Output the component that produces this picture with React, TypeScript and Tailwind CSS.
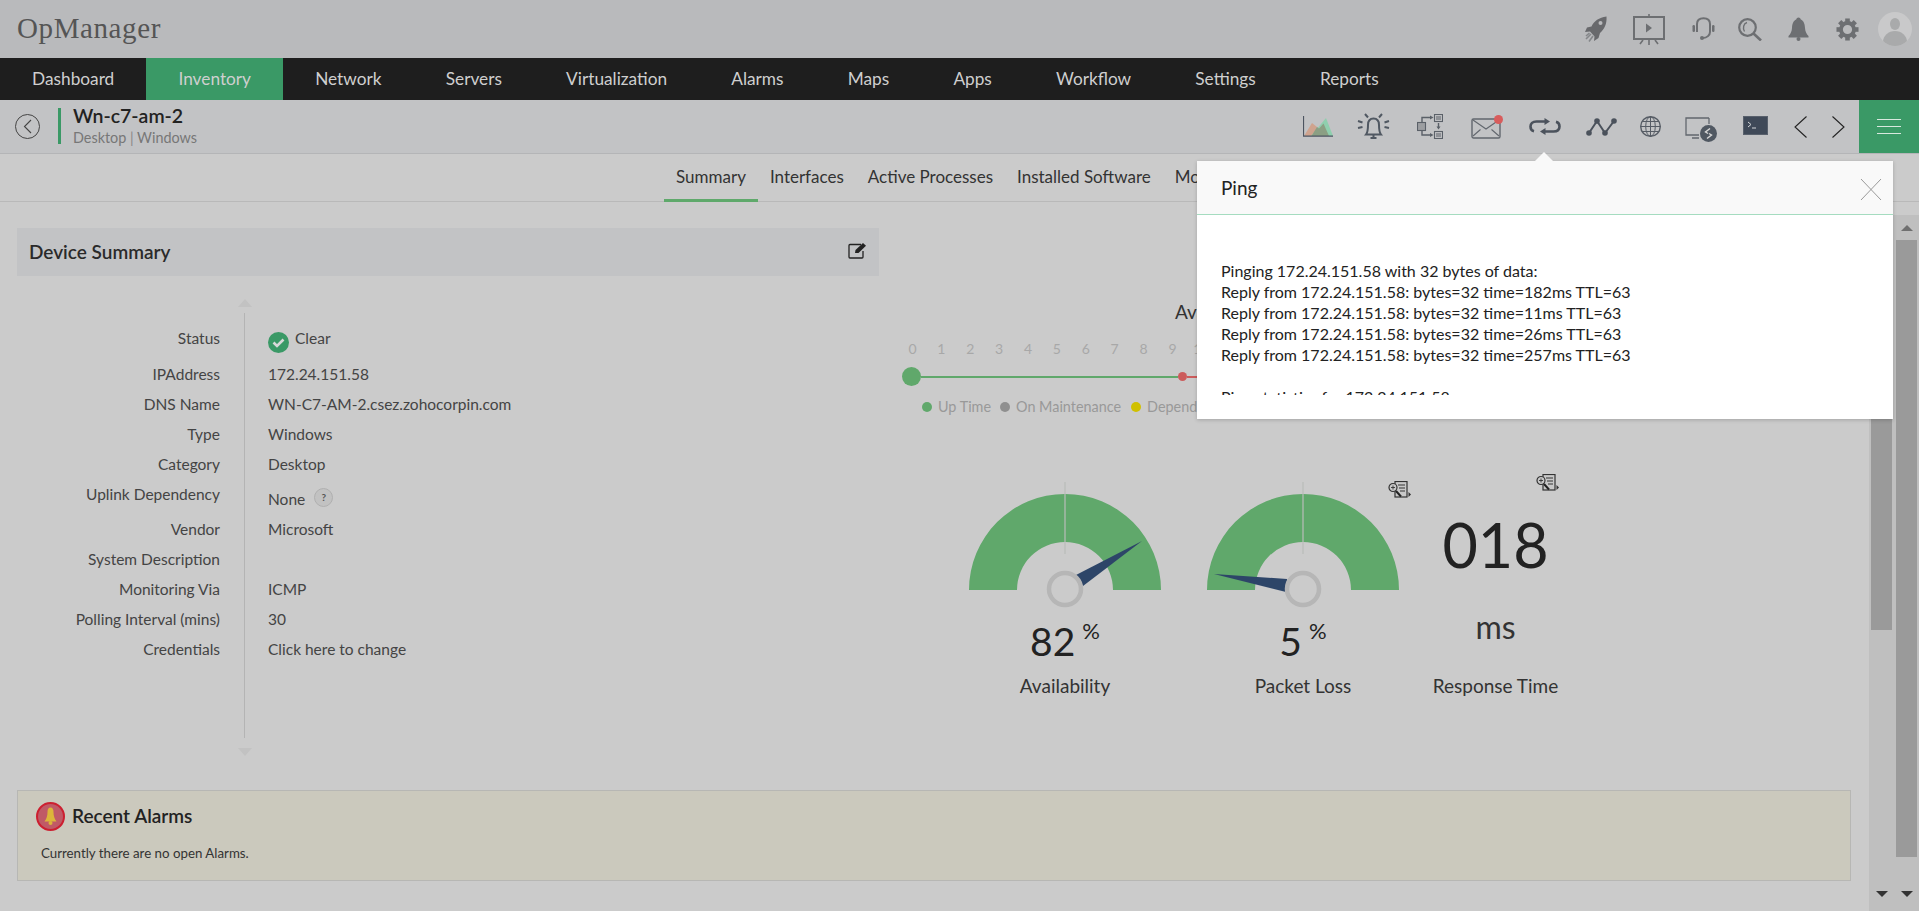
import React from 'react';

const navItems = ['Dashboard', 'Inventory', 'Network', 'Servers', 'Virtualization', 'Alarms', 'Maps', 'Apps', 'Workflow', 'Settings', 'Reports'];
const tabs = ['Summary', 'Interfaces', 'Active Processes', 'Installed Software', 'Monitors'];
const hours = Array.from({ length: 11 }, (_, i) => i);

const details = [
  { label: 'IPAddress', value: '172.24.151.58' },
  { label: 'DNS Name', value: 'WN-C7-AM-2.csez.zohocorpin.com' },
  { label: 'Type', value: 'Windows' },
  { label: 'Category', value: 'Desktop' },
];
const moreDetails = [
  { label: 'Vendor', value: 'Microsoft' },
  { label: 'System Description', value: '' },
  { label: 'Monitoring Via', value: 'ICMP' },
  { label: 'Polling Interval (mins)', value: '30' },
  { label: 'Credentials', value: 'Click here to change' },
];

const pingLines = [
  'Pinging 172.24.151.58 with 32 bytes of data:',
  'Reply from 172.24.151.58: bytes=32 time=182ms TTL=63',
  'Reply from 172.24.151.58: bytes=32 time=11ms TTL=63',
  'Reply from 172.24.151.58: bytes=32 time=26ms TTL=63',
  'Reply from 172.24.151.58: bytes=32 time=257ms TTL=63',
  '\u00a0',
  'Ping statistics for 172.24.151.58:',
];

const Rocket = () => (
  <svg width="22" height="26" viewBox="0 0 22 26" className="shrink-0">
    <path d="M21.5 0.5 C14 1.5 9 5 6.5 10.5 L2 11.5 L0 16 L5 15.5 L9.5 20.5 L9 25 L13.5 22 L15 17 C19.5 13 22 8 21.5 0.5 Z" fill="#68696c" />
    <circle cx="15.5" cy="7" r="2" fill="#b9babc" />
    <path d="M6 18 L1 23 M8 20 L4 25.5 M4.5 17 L1 20" stroke="#85878a" strokeWidth="1.6" />
  </svg>
);

const Presentation = () => (
  <svg width="32" height="31" viewBox="0 0 32 31" className="shrink-0">
    <path d="M16 0 V3 M16 25 V31 M10 26 L7 30 M22 26 L25 30" stroke="#6d6f72" strokeWidth="1.6" />
    <rect x="1" y="3" width="30" height="22" fill="none" stroke="#6d6f72" strokeWidth="2" />
    <path d="M13 9.5 L19 14 L13 18.5 Z" fill="#6d6f72" />
  </svg>
);

const Headset = () => (
  <svg width="23" height="24" viewBox="0 0 23 24" className="shrink-0">
    <path d="M5 15 V7 C5 3 8 1.2 11.5 1.2 C15 1.2 18 3 18 7 V15 C18 18 15 21 11 21" fill="none" stroke="#6d6f72" strokeWidth="2" />
    <rect x="0.5" y="8" width="2.5" height="7" rx="1.2" fill="#6d6f72" />
    <rect x="20" y="8" width="2.5" height="7" rx="1.2" fill="#6d6f72" />
    <circle cx="10" cy="21" r="2" fill="#6d6f72" />
  </svg>
);

const Search = () => (
  <svg width="24" height="23" viewBox="0 0 24 23" className="shrink-0">
    <circle cx="9.5" cy="9.5" r="8.3" fill="none" stroke="#6d6f72" strokeWidth="2.2" />
    <path d="M9 4.5 C5.5 5.5 4.5 10 6.5 13.5" fill="none" stroke="#6d6f72" strokeWidth="1.4" />
    <path d="M15.5 15.5 L23 22.5" stroke="#6d6f72" strokeWidth="2.6" />
  </svg>
);

const Bell = () => (
  <svg width="21" height="24" viewBox="0 0 21 24" className="shrink-0">
    <path d="M10.5 0.5 C12 0.5 12.5 1.5 12.8 2.6 C16 4 16.8 7.5 17 11 C17.2 14.5 18.5 17 20.5 19 V20.5 H0.5 V19 C2.5 17 3.8 14.5 4 11 C4.2 7.5 5 4 8.2 2.6 C8.5 1.5 9 0.5 10.5 0.5 Z" fill="#6d6f72" />
    <circle cx="10.5" cy="22" r="2" fill="#6d6f72" />
  </svg>
);

const Gear = () => (
  <svg width="25" height="23" viewBox="0 0 24 24" className="shrink-0">
    <circle cx="12" cy="12" r="6.8" fill="none" stroke="#6d6f72" strokeWidth="4" />
    {[0, 45, 90, 135, 180, 225, 270, 315].map((a) => (
      <rect key={a} x="9.6" y="0.5" width="4.8" height="5" fill="#6d6f72" transform={`rotate(${a} 12 12)`} />
    ))}
  </svg>
);

const Avatar = () => (
  <svg width="34" height="34" viewBox="0 0 34 34" className="shrink-0">
    <circle cx="17" cy="17" r="17" fill="#c9c9ca" />
    <clipPath id="avatar-clip"><circle cx="17" cy="17" r="17" /></clipPath>
    <g clipPath="url(#avatar-clip)" fill="#a9aaab">
      <ellipse cx="17" cy="12" rx="5" ry="6" />
      <ellipse cx="17" cy="30" rx="12" ry="11" />
    </g>
  </svg>
);

const ChartIcon = () => (
  <svg width="30" height="21" viewBox="0 0 30 21" className="shrink-0">
    <path d="M1 20 L9 7 L14 11 L20 20 Z" fill="#cfa38e" />
    <path d="M8 20 L23 2 L30 20 Z" fill="#8fcfae" />
    <path d="M8.5 20 L14 11 L16 12.5 L20.5 7.5 L26 20 Z" fill="#8b9f84" />
    <path d="M0.5 0 V20.2 H30" fill="none" stroke="#4c5460" strokeWidth="1.2" />
  </svg>
);

const AlarmIcon = () => (
  <svg width="33" height="27" viewBox="0 0 33 27" className="shrink-0">
    <g fill="none" stroke="#505862" strokeWidth="2">
      <path d="M9 21.5 C11 19 11 15 11 12 C11 8 13 5.5 16.5 5.5 C20 5.5 22 8 22 12 C22 15 22 19 24 21.5 Z" />
      <path d="M16.5 22 V25 M13.5 25 H19.5" />
      <path d="M8 1 L11 4.5 M25 1 L22 4.5 M1 8 L5.5 9.5 M32 8 L27.5 9.5 M1 15 L5.5 14 M32 15 L27.5 14" />
    </g>
  </svg>
);

const WorkflowIcon = () => (
  <svg width="26" height="25" viewBox="0 0 26 25" className="shrink-0">
    <g fill="none" stroke="#5a6068" strokeWidth="1.1">
      <rect x="17.5" y="0.5" width="8" height="7" />
      <rect x="17.5" y="17.5" width="8" height="7" />
      <rect x="0.5" y="8.5" width="8" height="8" fill="#9c9ea1" />
      <path d="M19 3 H24 M19 5 H24 M19 20 H24 M19 22 H24" />
      <path d="M5 8 V3.5 H13" strokeWidth="1.4" />
      <path d="M5 17 V21 H13" strokeWidth="1.4" />
      <path d="M21.5 9 V13" strokeWidth="1.4" />
    </g>
    <path d="M13 1.5 L16.5 3.5 L13 5.5 Z M13 19 L16.5 21 L13 23 Z M19.5 12.5 H23.5 L21.5 15.5 Z" fill="#5a6068" />
  </svg>
);

const MailIcon = () => (
  <svg width="32" height="24" viewBox="0 0 32 24" className="shrink-0">
    <rect x="1" y="4" width="28" height="19" rx="1.5" fill="none" stroke="#62676e" strokeWidth="1.4" />
    <path d="M2 5 L15 14 L28 5 M2 21 L9.5 14.5 M28 21 L20.5 14.5" fill="none" stroke="#62676e" strokeWidth="1.1" />
    <circle cx="27.5" cy="4.5" r="4.5" fill="#d85c5c" />
  </svg>
);

const LoopIcon = () => (
  <svg width="32" height="17" viewBox="0 0 32 17" className="shrink-0">
    <path d="M16 3.5 H7.5 C3.5 3.5 1.5 5.5 1.5 8.5 C1.5 11 3 12.8 5 13.3 M16 13.5 H24.5 C28.5 13.5 30.5 11.5 30.5 8.5 C30.5 6 29 4.2 27 3.7" fill="none" stroke="#4b525c" strokeWidth="2.6" />
    <path d="M15.5 0 L21 3.5 L15.5 7 Z M16.5 10 L11 13.5 L16.5 17 Z" fill="#4b525c" />
  </svg>
);

const GraphIcon = () => (
  <svg width="31" height="18" viewBox="0 0 31 18" className="shrink-0">
    <path d="M3 15 L11 3 L19 15 L28 3" fill="none" stroke="#4b525c" strokeWidth="2" />
    <g fill="#4b525c">
      <circle cx="3" cy="15" r="2.8" />
      <circle cx="11" cy="3" r="2.8" />
      <circle cx="19" cy="15" r="2.8" />
      <circle cx="28" cy="3" r="2.8" />
    </g>
  </svg>
);

const GlobeIcon = () => (
  <svg width="21" height="21" viewBox="0 0 21 21" className="shrink-0">
    <g fill="none" stroke="#565c65" strokeWidth="1">
      <circle cx="10.5" cy="10.5" r="9.8" strokeWidth="1.4" />
      <ellipse cx="10.5" cy="10.5" rx="4.8" ry="9.8" />
      <path d="M10.5 0.7 V20.3 M0.7 10.5 H20.3 M2 5.5 H19 M2 15.5 H19" />
    </g>
  </svg>
);

const RdpIcon = () => (
  <svg width="32" height="25" viewBox="0 0 32 25" className="shrink-0">
    <path d="M24 1 H1 V18 H14 M7 21 H14" fill="none" stroke="#62676e" strokeWidth="1.3" />
    <path d="M24 1 V7" stroke="#62676e" strokeWidth="1.3" />
    <circle cx="23.5" cy="16.5" r="8.5" fill="#505862" />
    <path d="M25 11.5 L20.5 15 L23 16.5 M22 21.5 L26.5 18 L24 16.5" fill="none" stroke="#d8d8d8" strokeWidth="1.4" />
  </svg>
);

const TerminalIcon = () => (
  <svg width="25" height="19" viewBox="0 0 25 19" className="shrink-0">
    <rect x="0.5" y="0.5" width="24" height="18" fill="#3f4958" stroke="#58606c" />
    <path d="M5 6 L8 8.5 L5 11 M9 12 H13" fill="none" stroke="#d4d6d8" strokeWidth="1" />
  </svg>
);

const Chevron = ({ dir }: { dir: 'left' | 'right' }) => (
  <svg width="13" height="22" viewBox="0 0 13 22" className="shrink-0">
    <path d={dir === 'left' ? 'M12.5 0.5 L1 11 L12.5 21.5' : 'M0.5 0.5 L12 11 L0.5 21.5'} fill="none" stroke="#222" strokeWidth="1.1" />
  </svg>
);

const ReportIcon = () => (
  <svg width="23" height="17" viewBox="0 0 23 17" className="shrink-0">
    <rect x="7" y="0.5" width="12" height="15.5" fill="#c8c8c8" stroke="#333" strokeWidth="1.2" />
    <path d="M10 4 H17 M11 7 H17 M12 10 H17" stroke="#333" strokeWidth="1.1" />
    <circle cx="5" cy="6.5" r="4" fill="#c8c8c8" stroke="#333" strokeWidth="1.2" />
    <path d="M3 6.5 H7 M5 4.5 V8.5" stroke="#333" strokeWidth="0.9" />
    <path d="M8 10 L13 15.5" stroke="#222" strokeWidth="2" />
    <path d="M20.5 11 L23 13.5 L20.5 16 Z" fill="#333" />
  </svg>
);

const Gauge = ({ needle, value, label }: { needle: string; value: string; label: string }) => (
  <div className="flex flex-col items-center w-[192px]">
    <svg width="192" height="130" viewBox="0 0 192 130" className="shrink-0">
      <path d="M0 108 A96 96 0 0 1 192 108 H144 A48 48 0 0 0 48 108 Z" fill="#60a86b" />
      <path d="M96 0 V72" stroke="#b9bcb9" strokeWidth="1.2" />
      <polygon points={needle} fill="#2d4568" />
      <circle cx="96" cy="107" r="16" fill="none" stroke="#b6b6b6" strokeWidth="4.5" />
    </svg>
    <div className="flex items-start h-[56px] mt-[1px] text-[#222]">
      <span className="text-[39px] leading-[56px] font-normal">{value}</span>
      <span className="text-[22px] leading-[26px] ml-[7px] mt-[5px]">%</span>
    </div>
    <div className="text-[19px] leading-6 text-[#333] mt-[5px] whitespace-nowrap">{label}</div>
  </div>
);

const Scrollbar = ({ thumbHeight }: { thumbHeight: string }) => (
  <div className="w-[25px] flex flex-col items-center h-full">
    <div className="h-[25px] flex items-center justify-center shrink-0">
      <div className="w-0 h-0 border-l-[6px] border-r-[6px] border-b-[6px] border-l-transparent border-r-transparent border-b-[#707070]" />
    </div>
    <div className={`w-[21px] bg-[#9a9a9a] shrink-0 ${thumbHeight}`} />
    <div className="flex-1" />
    <div className="h-[22px] flex items-start pt-[2px] justify-center shrink-0">
      <div className="w-0 h-0 border-l-[6px] border-r-[6px] border-t-[6px] border-l-transparent border-r-transparent border-t-[#333]" />
    </div>
  </div>
);

export default function App() {
  return (
    <div className="relative w-full h-screen overflow-hidden bg-[#cbcbcb] flex flex-col font-['Lato','Open_Sans',sans-serif]">
      {/* Top bar */}
      <div className="h-[58px] shrink-0 bg-[#b9babc] flex items-center pl-[17px] pr-[7px]">
        <span className="font-['Liberation_Serif',serif] text-[29px] text-[#555] tracking-[0.6px]">OpManager</span>
        <div className="ml-auto flex items-center">
          <Rocket />
          <div className="ml-[26px]"><Presentation /></div>
          <div className="ml-[27px]"><Headset /></div>
          <div className="ml-[23px]"><Search /></div>
          <div className="ml-[26px]"><Bell /></div>
          <div className="ml-[26px]"><Gear /></div>
          <div className="ml-[18px]"><Avatar /></div>
        </div>
      </div>

      {/* Main nav */}
      <div className="h-[42px] shrink-0 bg-[#1e1e1e] flex text-[17.25px] text-[#cfcfcf]">
        {navItems.map((item) => (
          <div key={item} className={`px-[32.1px] flex items-center ${item === 'Inventory' ? 'bg-[#3a9966]' : ''}`}>
            {item}
          </div>
        ))}
      </div>

      {/* Device header */}
      <div className="h-[54px] shrink-0 bg-[#c2c3c5] border-b border-[#b4b5b7] flex items-start">
        <div className="ml-[15px] mt-[14px] w-[25px] h-[25px] rounded-full border border-[#444] flex items-center justify-center">
          <svg width="9" height="15" viewBox="0 0 9 15"><path d="M8 1 L1.5 7.5 L8 14" fill="none" stroke="#444" strokeWidth="1.1" /></svg>
        </div>
        <div className="ml-[18px] mt-[8px] h-[36px] border-l-[3px] border-[#3a9966] pl-[12px]">
          <div className="text-[19.5px] leading-[18px] mt-[-1px] font-semibold text-[#222]">Wn-c7-am-2</div>
          <div className="text-[14.4px] leading-[18px] mt-[4px] text-[#777]">Desktop <span className="text-[#888]">|</span> Windows</div>
        </div>
        <div className="ml-auto flex items-center h-full">
          <ChartIcon />
          <div className="ml-[24px]"><AlarmIcon /></div>
          <div className="ml-[27px]"><WorkflowIcon /></div>
          <div className="ml-[28px]"><MailIcon /></div>
          <div className="ml-[26px]"><LoopIcon /></div>
          <div className="ml-[25px]"><GraphIcon /></div>
          <div className="ml-[23px]"><GlobeIcon /></div>
          <div className="ml-[24px] mt-[5px]"><RdpIcon /></div>
          <div className="ml-[26px] mt-[-2px]"><TerminalIcon /></div>
          <div className="ml-[26px]"><Chevron dir="left" /></div>
          <div className="ml-[25px]"><Chevron dir="right" /></div>
          <div className="ml-[14px] w-[60px] h-full bg-[#3a9966] flex flex-col items-center justify-center gap-[6px]">
            <div className="w-[24px] h-[1px] bg-[#d8e8de]" />
            <div className="w-[24px] h-[1px] bg-[#d8e8de]" />
            <div className="w-[24px] h-[1px] bg-[#d8e8de]" />
          </div>
        </div>
      </div>

      {/* Tabs */}
      <div className="h-[48px] shrink-0 border-b border-[#b9b9b9] flex pl-[664px] text-[17px] text-[#333]">
        {tabs.map((tab) => (
          <div key={tab} className={`h-[48px] flex items-center whitespace-nowrap ${tab === 'Summary' ? 'px-3 border-b-[3px] border-[#5fa96b]' : 'px-3 pb-[3px]'}`}>
            {tab}
          </div>
        ))}
      </div>

      {/* Page body */}
      <div className="flex-1 flex min-h-0">
        <div className="flex-1 min-w-0 pl-[17px] pr-[18px] pt-[26px]">
          <div className="flex h-[561px]">
            {/* Device summary */}
            <div className="w-[862px] shrink-0">
              <div className="h-[48px] bg-[#c2c3c5] flex items-center justify-between pl-[12px] pr-[12px]">
                <span className="text-[19px] font-semibold text-[#2a2a2a]">Device Summary</span>
                <svg width="19" height="17" viewBox="0 0 19 17" className="-mt-[3px]">
                  <path d="M13 2.5 H2 A1 1 0 0 0 1 3.5 V15 A1 1 0 0 0 2 16 H14 A1 1 0 0 0 15 15 V9" fill="none" stroke="#222" strokeWidth="1.3" />
                  <path d="M7 11 L7.5 8 L15 1 L18 3.8 L10.5 11 Z" fill="#222" />
                </svg>
              </div>
              <div className="flex mt-[23px] text-[15.5px] text-[#444]">
                <div className="w-[203px] shrink-0 text-right pt-[28px]">
                  <div className="h-[36px] leading-[22px]">Status</div>
                  {details.map((d) => (
                    <div key={d.label} className="h-[30px] leading-[22px]">{d.label}</div>
                  ))}
                  <div className="h-[35px] leading-[22px]">Uplink Dependency</div>
                  {moreDetails.map((d) => (
                    <div key={d.label} className="h-[30px] leading-[22px]">{d.label}</div>
                  ))}
                </div>
                <div className="w-[15px] shrink-0 ml-[17px] flex flex-col items-center h-[457px]">
                  <div className="w-0 h-0 border-l-[7px] border-r-[7px] border-b-[8px] border-l-transparent border-r-transparent border-b-[#c2c2c2]" />
                  <div className="w-px flex-1 bg-[#b4b4b4] my-[6px] mb-[10px]" />
                  <div className="w-0 h-0 border-l-[7px] border-r-[7px] border-t-[8px] border-l-transparent border-r-transparent border-t-[#c2c2c2]" />
                </div>
                <div className="ml-[16px] pt-[28px]">
                  <div className="h-[36px] leading-[22px] flex items-start">
                    <svg width="21" height="21" viewBox="0 0 21 21" className="mt-[5px]">
                      <circle cx="10.5" cy="10.5" r="10.5" fill="#3a9966" />
                      <path d="M5.5 10.5 L9 14 L15.5 7.5" fill="none" stroke="#d8d8d8" strokeWidth="2.6" />
                    </svg>
                    <span className="ml-[6px]">Clear</span>
                  </div>
                  {details.map((d) => (
                    <div key={d.label} className="h-[30px] leading-[22px]">{d.value}</div>
                  ))}
                  <div className="h-[35px] flex items-start pt-[5px]">
                    <span className="leading-[22px]">None</span>
                    <span className="ml-[9px] w-[19px] h-[19px] rounded-full bg-[#c2c2c2] border border-[#b0b0b0] flex items-center justify-center text-[10px] font-bold text-[#555]">?</span>
                  </div>
                  {moreDetails.map((d) => (
                    <div key={d.label} className="h-[30px] leading-[22px]">{d.value}</div>
                  ))}
                </div>
              </div>
            </div>

            {/* Availability and gauges */}
            <div className="flex-1 min-w-0 pl-[19px]">
              <div className="text-[19px] leading-6 text-[#333] pl-[277px] pt-[72px] whitespace-nowrap">Availability</div>
              <div className="flex mt-[15px] text-[14px] leading-[20px] text-[#a8a8a8]">
                {hours.map((h) => (
                  <div key={h} className="w-[28.9px] shrink-0 text-center">{h}</div>
                ))}
              </div>
              <div className="flex items-center h-[19px] mt-[8px] ml-[4px]">
                <div className="w-[19px] h-[19px] rounded-full bg-[#60a86b] shrink-0" />
                <div className="w-[257px] h-[2px] bg-[#60a86b] shrink-0" />
                <div className="w-[9px] h-[9px] rounded-full bg-[#cc5c5c] shrink-0" />
                <div className="w-[30px] h-[2px] bg-[#cc5c5c] shrink-0" />
              </div>
              <div className="flex items-center mt-[11px] ml-[24px] text-[14.4px] leading-[20px] text-[#999] whitespace-nowrap">
                <span className="w-[10px] h-[10px] rounded-full bg-[#60a86b]" />
                <span className="ml-[6px]">Up Time</span>
                <span className="ml-[9px] w-[10px] h-[10px] rounded-full bg-[#8f8f8f]" />
                <span className="ml-[6px]">On Maintenance</span>
                <span className="ml-[10px] w-[10px] h-[10px] rounded-full bg-[#d0c000]" />
                <span className="ml-[6px]">Dependency</span>
              </div>
              <div className="flex mt-[65px] ml-[71px]">
                <Gauge needle="107,93 173,59 114,104" value="82" label="Availability" />
                <div className="ml-[46px] relative">
                  <Gauge needle="7,92 80,97 79,110" value="5" label="Packet Loss" />
                  <div className="absolute left-[181px] top-[-1px]"><ReportIcon /></div>
                </div>
                <div className="w-[125px] ml-[34px] flex flex-col items-center relative">
                  <div className="absolute left-[103px] top-[-8px]"><ReportIcon /></div>
                  <div className="text-[61px] leading-[80px] mt-[23px] text-[#222]">018</div>
                  <div className="text-[32px] leading-[40px] mt-[22px] text-[#333]">ms</div>
                  <div className="text-[19px] leading-6 text-[#333] mt-[27px] whitespace-nowrap">Response Time</div>
                </div>
              </div>
            </div>
          </div>

          {/* Recent alarms */}
          <div className="mt-[1px] h-[91px] bg-[#cbc9bd] border border-[#b7b7b4] pl-[18px] pt-[11px]">
            <div className="flex items-center">
              <svg width="29" height="29" viewBox="0 0 29 29" className="shrink-0">
                <circle cx="14.5" cy="14.5" r="13.5" fill="#c05a66" stroke="#cc1f30" strokeWidth="2" />
                <path d="M14.5 5.5 C16.5 5.5 17.5 7 17.5 10 C17.5 14 18.5 17 20.5 19.5 H8.5 C10.5 17 11.5 14 11.5 10 C11.5 7 12.5 5.5 14.5 5.5 Z" fill="#dcb53a" />
                <circle cx="14.5" cy="21" r="2" fill="#dcb53a" />
              </svg>
              <span className="ml-[7px] text-[19px] font-semibold text-[#222]">Recent Alarms</span>
            </div>
            <div className="mt-[13px] ml-[5px] text-[13.3px] leading-[18px] text-[#333]">Currently there are no open Alarms.</div>
          </div>
        </div>

        {/* Scroll tracks */}
        <div className="w-[50px] shrink-0 mt-[13px] bg-[#bfbfbf] flex">
          <Scrollbar thumbHeight="h-[390px]" />
          <Scrollbar thumbHeight="h-[617px]" />
        </div>
      </div>

      {/* Ping dialog */}
      <div className="absolute left-[1197px] top-[161px] w-[696px] h-[258px] bg-white shadow-[0_1px_4px_rgba(0,0,0,0.2)]">
        <div className="absolute left-[338px] top-[-9px] w-0 h-0 border-l-[9px] border-r-[9px] border-b-[9px] border-l-transparent border-r-transparent border-b-[#f9f9f9]" />
        <div className="h-[54px] bg-[#f9f9f9] border-b border-[#a5dcc0] flex items-center justify-between pl-[24px] pr-[11px]">
          <span className="text-[19px] text-[#222] mt-[1px]">Ping</span>
          <svg width="22" height="23" viewBox="0 0 22 23" className="mt-[4px]">
            <path d="M1 1 L21 22 M21 1 L1 22" stroke="#9a9a9a" strokeWidth="1" />
          </svg>
        </div>
        <div className="mt-[45px] ml-[24px] h-[135px] overflow-hidden text-[16px] leading-[21px] text-[#222]">
          {pingLines.map((line, i) => (
            <div key={i}>{line}</div>
          ))}
        </div>
      </div>
    </div>
  );
}
